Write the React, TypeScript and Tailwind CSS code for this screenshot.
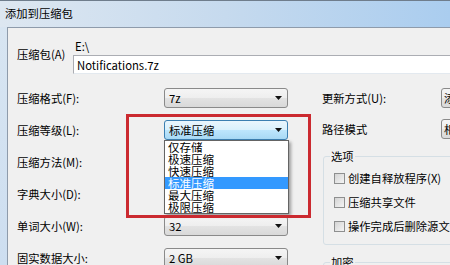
import React from "react";

const Arrow = () => (
  <svg width="7" height="4" viewBox="0 0 7 4" className="shrink-0">
    <path d="M0 0h7L3.5 4z" fill="#111" />
  </svg>
);

const Combo = ({ value, open }: { value: string; open?: boolean }) => (
  <div
    className={
      open
        ? "flex h-[20px] w-[124px] items-center justify-between rounded-[3px] border border-[#3c7fb1] bg-[linear-gradient(#eaf6fd,#d9f0fc_50%,#bee6fd_50%,#a7d9f5)] pl-[4px] pr-[5px]"
        : "flex h-[20px] w-[124px] items-center justify-between rounded-[3px] border border-[#8a8a8a] bg-[linear-gradient(#f5f5f5,#eeeeee_50%,#e3e3e3_50%,#d9d9d9)] pl-[4px] pr-[5px]"
    }
  >
    <span className="leading-[14px]">{value}</span>
    <Arrow />
  </div>
);

const levels = ["仅存储", "极速压缩", "快速压缩", "标准压缩", "最大压缩", "极限压缩"];

const Row = ({ label, children }: { label: string; children: React.ReactNode }) => (
  <div className="flex h-[20px] items-center">
    <span className="w-[147px] leading-[14px]">{label}</span>
    {children}
  </div>
);

const Check = ({ label }: { label: string }) => (
  <div className="ml-[4px] flex h-[14px] items-center gap-[3px] whitespace-nowrap">
    <span className="h-[11px] w-[11px] shrink-0 border border-[#8e8f8f] bg-[linear-gradient(135deg,#d4d4d4,#f4f4f4)]" />
    <span className="leading-[14px]">{label}</span>
  </div>
);

export default function App() {
  return (
    <div className="relative flex h-[265px] w-[450px] flex-col overflow-hidden bg-[linear-gradient(#d9e6f2,#cddef0)] font-['Noto_Sans_CJK_SC','Liberation_Sans',sans-serif] text-[11.3px] text-black">
      {/* title bar */}
      <div className="flex h-[27px] shrink-0 items-center border-t border-[#6f7d8c] bg-[linear-gradient(to_right,#dde7f1,#c6daee_50%,#aacdef)] pl-[5px] leading-none">
        添加到压缩包
      </div>

      {/* dialog body */}
      <div className="ml-[7px] flex-1 border-l border-t border-[#8e9bab] bg-[#f0f0f0] pl-[9px] pt-[11px]">
        <div className="flex">
          <span className="w-[56px] shrink-0 pt-[8px] leading-[14px]">压缩包(A)</span>
          <div className="flex flex-col">
            <span className="pl-[2px] leading-[14px]">E:\</span>
            <div className="mt-[2px] flex h-[19px] w-[400px] items-center border border-[#abadb3] border-b-[#e3e9ef] bg-white pl-[3px] leading-[14px]">
              Notifications.7z
            </div>
          </div>
        </div>

        <div className="mt-[14px] flex">
          {/* left column */}
          <div className="flex w-[271px] shrink-0 flex-col gap-[12px]">
            <Row label="压缩格式(F):">
              <Combo value="7z" />
            </Row>
            <Row label="压缩等级(L):">
              <div className="relative z-10">
                <Combo value="标准压缩" open />
                <div className="absolute left-0 top-full w-[125px] border border-[#646464] bg-white shadow-[2px_2px_3px_rgba(0,0,0,0.35)]">
                  {levels.map((l, i) => (
                    <div
                      key={l}
                      className={
                        i === 3
                          ? "flex h-[12px] items-center bg-[#3399ff] pl-[3px] text-[11.5px] leading-[12px] text-white"
                          : "flex h-[12px] items-center pl-[3px] text-[11.5px] leading-[12px]"
                      }
                    >
                      {l}
                    </div>
                  ))}
                </div>
              </div>
            </Row>
            <Row label="压缩方法(M):">
              <Combo value="" />
            </Row>
            <Row label="字典大小(D):">
              <Combo value="" />
            </Row>
            <Row label="单词大小(W):">
              <Combo value="32" />
            </Row>
            <Row label="固实数据大小:">
              <Combo value="2 GB" />
            </Row>
          </div>

          {/* right column */}
          <div className="ml-[34px] flex w-[220px] shrink-0 flex-col">
            <div className="flex h-[20px] items-center">
              <span className="w-[119px] leading-[14px]">更新方式(U):</span>
              <div className="flex h-[20px] w-[90px] items-center whitespace-nowrap rounded-[3px] border border-[#8a8a8a] bg-[linear-gradient(#f5f5f5,#eeeeee_50%,#e3e3e3_50%,#d9d9d9)] pl-[2px]">
                添加并替换文件
              </div>
            </div>
            <div className="mt-[11px] flex h-[20px] items-center">
              <span className="w-[119px] leading-[14px]">路径模式</span>
              <div className="flex h-[20px] w-[90px] items-center whitespace-nowrap rounded-[3px] border border-[#8a8a8a] bg-[linear-gradient(#f5f5f5,#eeeeee_50%,#e3e3e3_50%,#d9d9d9)] pl-[2px]">
                相对路径
              </div>
            </div>

            <fieldset className="ml-[1px] mt-[10px] flex flex-col gap-[10px] rounded-[3px] border border-[#d5dfe5] pb-[11px] pl-[6px] pt-[8px]">
              <legend className="px-[1px] leading-[14px]">选项</legend>
              <Check label="创建自释放程序(X)" />
              <Check label="压缩共享文件" />
              <Check label="操作完成后删除源文件" />
            </fieldset>

            <fieldset className="ml-[1px] mt-[10px] rounded-[3px] border border-[#d5dfe5] pl-[6px] pt-[8px]">
              <legend className="px-[1px] leading-[14px]">加密</legend>
              <div className="h-[20px]" />
            </fieldset>
          </div>
        </div>
      </div>

      {/* red annotation box */}
      <div className="pointer-events-none absolute left-[126px] top-[114px] z-20 h-[104px] w-[185px] border-[3px] border-[#cb2a30]" />
    </div>
  );
}
